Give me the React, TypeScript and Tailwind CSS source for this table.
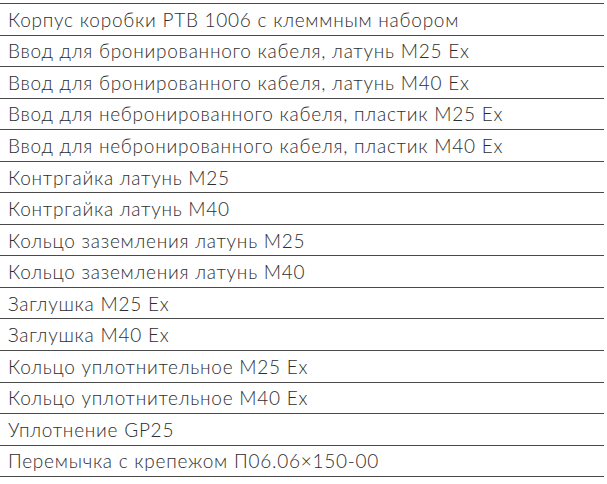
const items = [
  'Корпус коробки РТВ 1006 с клеммным набором',
  'Ввод для бронированного кабеля, латунь М25 Ex',
  'Ввод для бронированного кабеля, латунь М40 Ex',
  'Ввод для небронированного кабеля, пластик М25 Ex',
  'Ввод для небронированного кабеля, пластик М40 Ex',
  'Контргайка латунь М25',
  'Контргайка латунь М40',
  'Кольцо заземления латунь М25',
  'Кольцо заземления латунь М40',
  'Заглушка М25 Ex',
  'Заглушка М40 Ex',
  'Кольцо уплотнительное М25 Ex',
  'Кольцо уплотнительное М40 Ex',
  'Уплотнение GP25',
  'Перемычка с крепежом П06.06×150-00',
]

export default function App() {
  return (
    <div className="w-[607px] h-[484px] bg-white pt-[3px] overflow-hidden">
      <div className="w-[604px] border-t border-[#4a4a4a]">
        {items.map((item) => (
          <div
            key={item}
            className="h-[31.55px] flex items-center pl-[8px] border-b border-[#4a4a4a] text-[19px] tracking-[0.75px] text-[#2e2e2e] font-light leading-none"
            style={{ fontFamily: 'Lato, "Noto Sans", sans-serif' }}
          >
            {item}
          </div>
        ))}
      </div>
    </div>
  )
}
